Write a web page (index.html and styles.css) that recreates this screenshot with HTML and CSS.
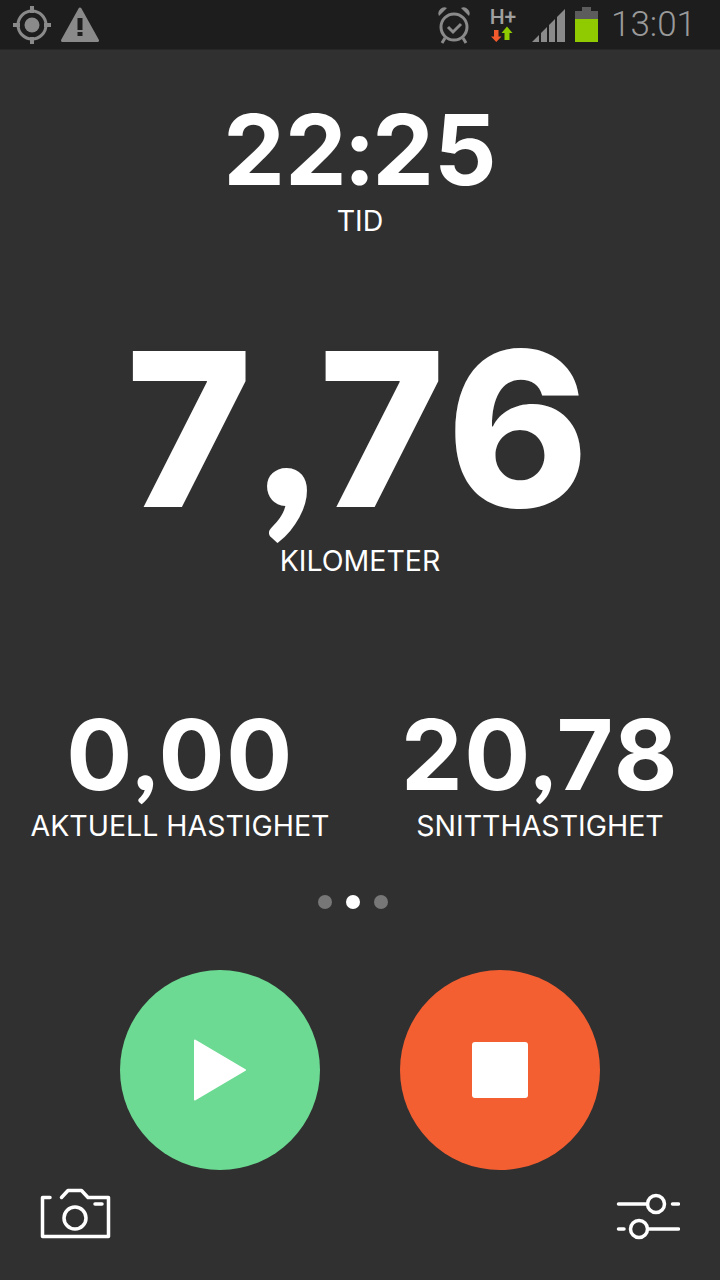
FILE: index.html
```html
<!DOCTYPE html>
<html lang="en">
<head>
  <meta charset="UTF-8">
  <meta name="viewport" content="width=device-width, initial-scale=1.0">
  <title>Tracker</title>
  <link rel="stylesheet" href="styles.css">
</head>
<body>
  <div class="app">

    <!-- Status bar -->
    <header class="status-bar">
      <div class="status-left">
        <svg class="status-icon" width="40" height="40" viewBox="0 0 40 40">
          <circle cx="20" cy="20" r="14" fill="none" stroke="#8a8a8a" stroke-width="3"/>
          <circle cx="20" cy="20" r="7.500" fill="#8a8a8a"/>
          <path d="M20 1v7M20 32v7M1 20h7M32 20h7" stroke="#8a8a8a" stroke-width="4"/>
        </svg>
        <svg class="status-icon" width="40" height="40" viewBox="0 0 40 40">
          <path d="M21 4 L38.500 35.500 H3.500 Z" fill="#8a8a8a" stroke="#8a8a8a" stroke-width="3" stroke-linejoin="round"/>
          <path d="M21 13v12M21 27v4" stroke="#1d1d1d" stroke-width="5"/>
        </svg>
      </div>
      <div class="status-right">
        <svg class="status-icon alarm" width="34" height="38" viewBox="0 0 34 38">
          <circle cx="18" cy="21" r="13" fill="none" stroke="#8a8a8a" stroke-width="3"/>
          <path d="M12 21l5 5 8-8" fill="none" stroke="#8a8a8a" stroke-width="3"/>
          <path d="M3 10 A6 6 0 0 1 11 2 Z M33 10 A6 6 0 0 0 25 2 Z" fill="#8a8a8a"/>
          <path d="M9 32l-3 5M27 32l3 5" stroke="#8a8a8a" stroke-width="3"/>
        </svg>
        <div class="network">
          <span class="network-type">H+</span>
          <svg width="24" height="16" viewBox="0 0 24 16">
            <path d="M3 4h4.500v6.500h3l-5.250 5.500-5.250-5.500h3z" fill="#f2592c"/>
            <path d="M13.500 14v-7h-3l5.500-6.500 5.500 6.500h-3v7z" fill="#8fcb00"/>
          </svg>
        </div>
        <svg class="status-icon signal" width="34" height="34" viewBox="0 0 34 34">
          <path d="M0 33 L7 26 V33Z M9 33 V24 L15 18 V33Z M17 33 V16 L23 10 V33Z M25 33 V8 L33 0 V33Z" fill="#8a8a8a"/>
        </svg>
        <div class="battery">
          <div class="battery-cap"></div>
          <div class="battery-body">
            <div class="battery-level"></div>
          </div>
        </div>
        <span class="clock">13:01</span>
      </div>
    </header>

    <main class="stats">
      <section class="stat stat-time">
        <div class="value value-medium">22<span class="punct">:</span>25</div>
        <div class="label">TID</div>
      </section>

      <section class="stat stat-distance">
        <div class="value value-large">7<span class="punct">,</span>76</div>
        <div class="label">KILOMETER</div>
      </section>

      <section class="speed-row">
        <div class="stat">
          <div class="value value-small">0<span class="punct">,</span>00</div>
          <div class="label">AKTUELL HASTIGHET</div>
        </div>
        <div class="stat">
          <div class="value value-small">20<span class="punct">,</span>78</div>
          <div class="label">SNITTHASTIGHET</div>
        </div>
      </section>

      <!-- Page dots -->
      <div class="dots">
        <span class="dot"></span>
        <span class="dot dot-active"></span>
        <span class="dot"></span>
      </div>

      <div class="controls">
        <button class="round-btn btn-play">
          <svg width="54" height="62" viewBox="0 0 54 62">
            <path d="M2 1.500 L52 31 L2 60.500 Z" fill="#fff" stroke="#fff" stroke-width="2" stroke-linejoin="round"/>
          </svg>
        </button>
        <button class="round-btn btn-stop">
          <span class="stop-square"></span>
        </button>
      </div>
    </main>

    <footer class="toolbar">
      <svg width="72" height="52" viewBox="0 0 72 52">
        <path d="M10 9.500H2.500V48.500H68.500V9.500H48L41.500 2.500H28L21.500 9.500" fill="none" stroke="#fff" stroke-width="3.500" stroke-linecap="round" stroke-linejoin="round"/>
        <circle cx="35" cy="30" r="11" fill="none" stroke="#fff" stroke-width="3.500"/>
        <path d="M55 16h7" stroke="#fff" stroke-width="3.500" stroke-linecap="round"/>
      </svg>
      <svg width="64" height="48" viewBox="0 0 64 48">
        <path d="M2.500 12H31.500M56.500 12H62.500M2.500 37H8M32 37H62.500" fill="none" stroke="#fff" stroke-width="3.500" stroke-linecap="round"/>
        <circle cx="40" cy="12" r="8.500" fill="none" stroke="#fff" stroke-width="3.500"/>
        <circle cx="23" cy="37" r="8.500" fill="none" stroke="#fff" stroke-width="3.500"/>
      </svg>
    </footer>

  </div>
</body>
</html>
```

FILE: styles.css
```css
/* General styles */
* {
  box-sizing: border-box;
}

body {
  margin: 0;
  padding: 0;
  background-color: #303030;
  font-family: Inter, sans-serif;
  color: #ffffff;
}

.app {
  display: flex;
  flex-direction: column;
  width: 720px;
  height: 1280px;
  overflow: hidden;
}

/* Status bar */
.status-bar {
  display: flex;
  justify-content: space-between;
  align-items: center;
  height: 50px;
  padding: 0 24px 0 12px;
  background-color: #1d1d1d;
  border-bottom: 1px solid #272727;
}

.status-left {
  display: flex;
  align-items: center;
  gap: 7px;
}

.status-right {
  display: flex;
  align-items: center;
}

.status-icon {
  display: block;
}

.network {
  display: flex;
  flex-direction: column;
  align-items: center;
  width: 28px;
  margin-left: 19px;
}

.network-type {
  font-family: Roboto, sans-serif;
  font-size: 21px;
  font-weight: 500;
  line-height: 18px;
  color: #a0a0a0;
}

.signal {
  margin-left: 15px;
  margin-top: 3px;
}

.battery {
  display: flex;
  flex-direction: column;
  align-items: center;
  margin-left: 9px;
}

.battery-cap {
  width: 9px;
  height: 4px;
  background-color: #5c5c5c;
}

.battery-body {
  display: flex;
  flex-direction: column;
  justify-content: flex-end;
  width: 23px;
  height: 31px;
  background-color: #5c5c5c;
}

.battery-level {
  height: 23px;
  background-color: #8fcb00;
}

.clock {
  margin-left: 13px;
  font-family: Roboto, sans-serif;
  font-weight: 300;
  font-size: 35px;
  color: #9a9a9a;
}

/* Stats */
.stats {
  display: flex;
  flex-direction: column;
  flex: 1;
}

.stat {
  display: flex;
  flex-direction: column;
  align-items: center;
}

.value {
  font-weight: 700;
}

.punct {
  font-family: Lato, sans-serif;
  font-weight: 900;
  line-height: 0;
}

.value-medium {
  font-size: 98px;
  line-height: 100px;
  letter-spacing: 0;
}

.value-large {
  font-size: 215px;
  line-height: 216px;
  letter-spacing: 5px;
  font-weight: 800;
}

.value-large .punct {
  font-size: 1.17em;
  letter-spacing: 2px;
}

.value-small {
  font-size: 98px;
  line-height: 100px;
  letter-spacing: 1.5px;
}

.label {
  font-size: 28.5px;
  line-height: 32px;
  font-weight: 400;
  margin-top: 5px;
}

.stat-time {
  margin-top: 50px;
}

.stat-distance {
  margin-top: 84px;
}

.stat-distance .label {
  margin-top: 8px;
}

.speed-row {
  display: grid;
  grid-template-columns: 1fr 1fr;
  margin-top: 128px;
}

.dots {
  display: flex;
  justify-content: center;
  gap: 14px;
  margin-top: 53px;
  padding-right: 14px;
}

.dot {
  width: 14px;
  height: 14px;
  border-radius: 50%;
  background-color: #777777;
}

.dot-active {
  background-color: #ffffff;
}

.controls {
  display: flex;
  justify-content: center;
  gap: 80px;
  margin-top: 61px;
}

.round-btn {
  display: flex;
  align-items: center;
  justify-content: center;
  width: 200px;
  height: 200px;
  padding: 0;
  border: none;
  border-radius: 50%;
}

.btn-play {
  background-color: #6cda92;
}

.btn-stop {
  background-color: #f45f32;
}

.stop-square {
  width: 56px;
  height: 56px;
  border-radius: 3px;
  background-color: #ffffff;
}

/* Bottom icons */
.toolbar {
  display: flex;
  justify-content: space-between;
  align-items: flex-end;
  padding: 0 40px 40px 40px;
}
```
